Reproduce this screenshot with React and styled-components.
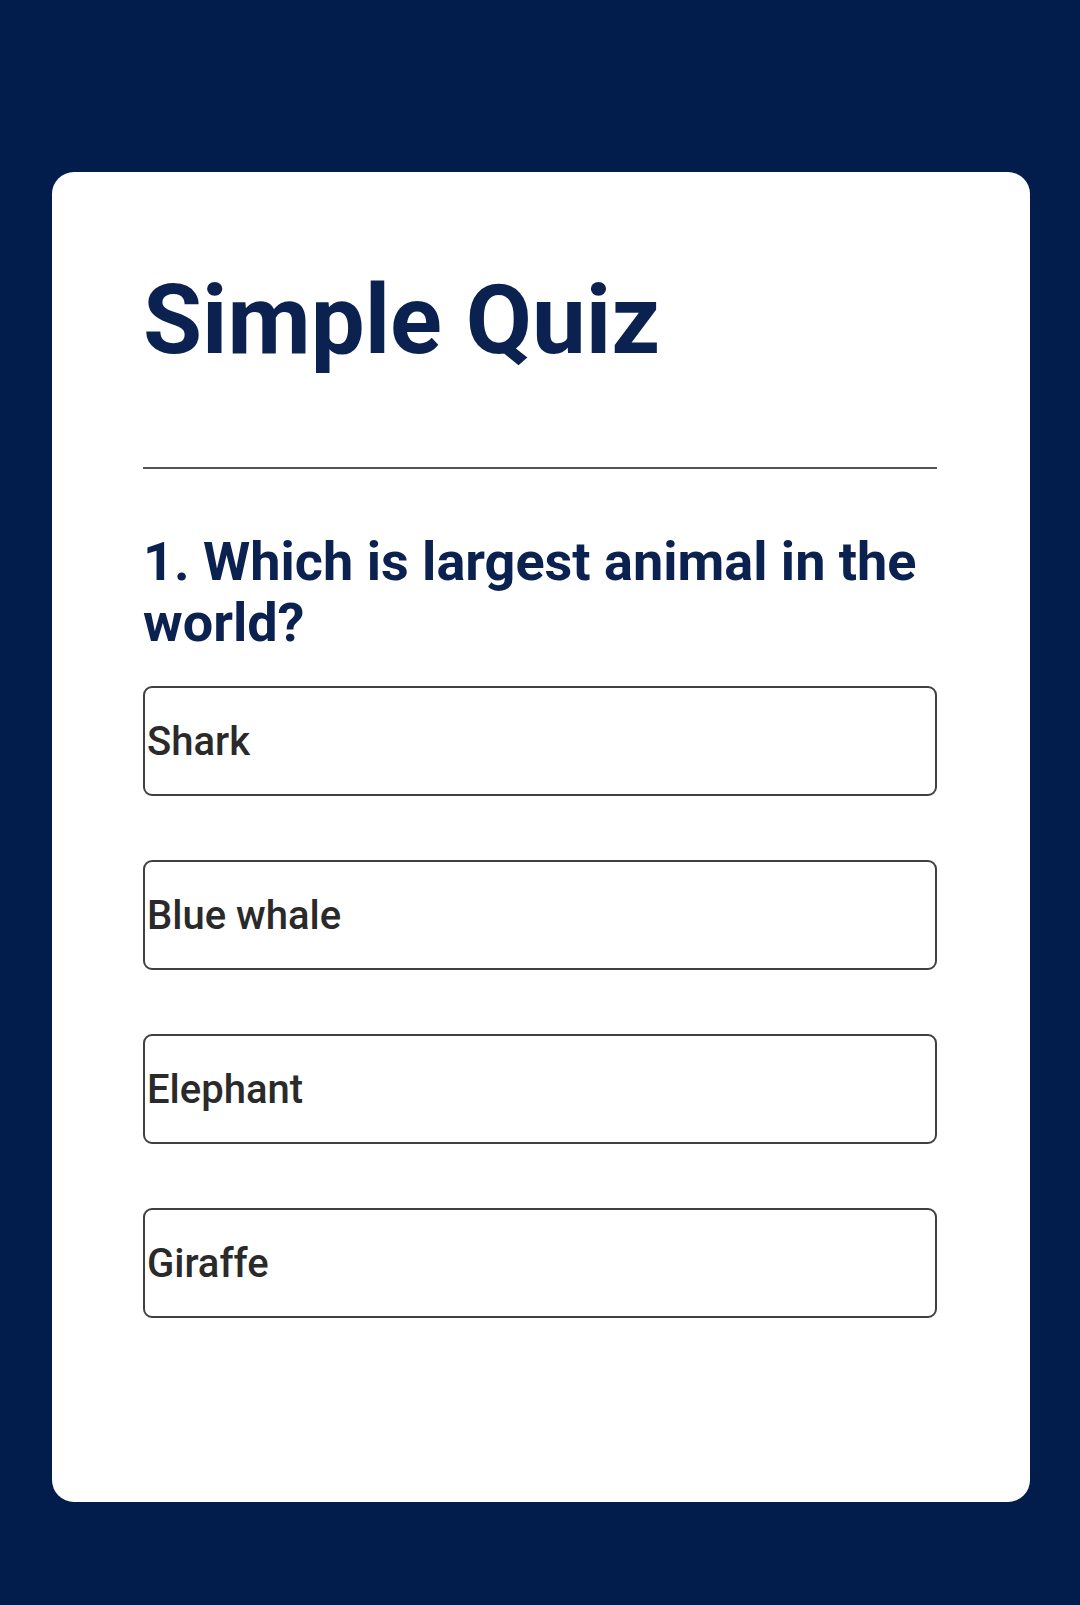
import React from "react";
import styled, { createGlobalStyle } from "styled-components";

const GlobalStyle = createGlobalStyle`
  html, body {
    margin: 0;
    padding: 0;
    background-color: #021d4b;
  }
  * {
    box-sizing: border-box;
  }
`;

export const Page = styled.div`
  min-height: 1605px;
  background-color: #021d4b;
  padding: 172px 50px 0 52px;
  font-family: "Roboto", "Liberation Sans", sans-serif;
`;

export const Card = styled.div`
  background-color: #ffffff;
  border-radius: 22px;
  padding: 92px 93px 184px 91px;
  display: flex;
  flex-direction: column;
`;

export const Title = styled.h1`
  margin: 0;
  font-size: 96px;
  font-weight: 700;
  color: #0b2150;
  line-height: normal;
`;

export const Divider = styled.hr`
  margin: 91px 0 0 0;
  border: none;
  height: 2px;
  background-color: #555;
`;

export const Question = styled.h2`
  margin: 62px 0 0 0;
  font-size: 54px;
  font-weight: 700;
  color: #0b2150;
  line-height: 61px;
`;

export const Options = styled.div`
  display: flex;
  flex-direction: column;
  gap: 64px;
  margin-top: 33px;
`;

export const Option = styled.button`
  display: flex;
  align-items: center;
  height: 110px;
  width: 100%;
  padding: 0 0 0 2px;
  background: #fff;
  border: 2.5px solid #404040;
  border-radius: 9px;
  font-family: "Roboto", "Liberation Sans", sans-serif;
  font-size: 40px;
  font-weight: 500;
  color: #2a2a2a;
  text-align: left;
  cursor: pointer;
`;

const answers = ["Shark", "Blue whale", "Elephant", "Giraffe"];

function App() {
  return (
    <>
      <GlobalStyle />
      <Page>
        <Card>
          <Title>Simple Quiz</Title>
          <Divider />
          <Question>1. Which is largest animal in the world?</Question>
          <Options>
            {answers.map((a) => (
              <Option key={a}>{a}</Option>
            ))}
          </Options>
        </Card>
      </Page>
    </>
  );
}

export default App;
